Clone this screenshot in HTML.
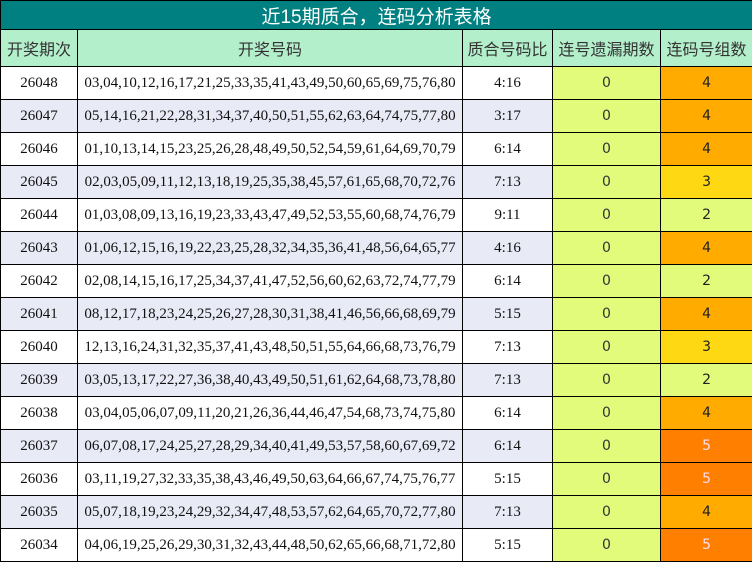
<!DOCTYPE html><html><head><meta charset="utf-8"><style>
body{margin:0;width:752px;height:562px;overflow:hidden;background:#fff}
table{border-collapse:collapse;table-layout:fixed;width:752px;font-family:"Liberation Serif","Noto Serif CJK SC",serif;font-size:15px;color:#111}
td{border:1px solid #000;text-align:center;padding:0;height:32px;white-space:nowrap}
.t td{background:#008080;color:#fff;font-size:19px;height:28px;font-family:"Liberation Sans","Noto Sans CJK SC",sans-serif}
.h td{background:#b4efcc;color:#333;height:36px;font-size:16px;font-family:"Liberation Sans","Noto Sans CJK SC",sans-serif}
tr.s td{background:#e8eaf6}
td.z{background:#e3fb7a!important;font-family:"DejaVu Sans",sans-serif;font-size:14px;color:#333}
td.c{font-family:"DejaVu Sans",sans-serif;font-size:14px;color:#222}
td.c2{background:#e3fb7a!important}td.c3{background:#ffd814!important}td.c4{background:#ffab00!important}td.c5{background:#ff7f00!important;color:#fde}
</style></head><body><table>
<colgroup><col style="width:77px"><col style="width:385px"><col style="width:90px"><col style="width:108px"><col style="width:92px"></colgroup>
<tr class="t"><td colspan="5">近15期质合，连码分析表格</td></tr>
<tr class="h"><td>开奖期次</td><td>开奖号码</td><td>质合号码比</td><td>连号遗漏期数</td><td>连码号组数</td></tr>
<tr><td>26048</td><td>03,04,10,12,16,17,21,25,33,35,41,43,49,50,60,65,69,75,76,80</td><td>4:16</td><td class="z">0</td><td class="c c4">4</td></tr>
<tr class="s"><td>26047</td><td>05,14,16,21,22,28,31,34,37,40,50,51,55,62,63,64,74,75,77,80</td><td>3:17</td><td class="z">0</td><td class="c c4">4</td></tr>
<tr><td>26046</td><td>01,10,13,14,15,23,25,26,28,48,49,50,52,54,59,61,64,69,70,79</td><td>6:14</td><td class="z">0</td><td class="c c4">4</td></tr>
<tr class="s"><td>26045</td><td>02,03,05,09,11,12,13,18,19,25,35,38,45,57,61,65,68,70,72,76</td><td>7:13</td><td class="z">0</td><td class="c c3">3</td></tr>
<tr><td>26044</td><td>01,03,08,09,13,16,19,23,33,43,47,49,52,53,55,60,68,74,76,79</td><td>9:11</td><td class="z">0</td><td class="c c2">2</td></tr>
<tr class="s"><td>26043</td><td>01,06,12,15,16,19,22,23,25,28,32,34,35,36,41,48,56,64,65,77</td><td>4:16</td><td class="z">0</td><td class="c c4">4</td></tr>
<tr><td>26042</td><td>02,08,14,15,16,17,25,34,37,41,47,52,56,60,62,63,72,74,77,79</td><td>6:14</td><td class="z">0</td><td class="c c2">2</td></tr>
<tr class="s"><td>26041</td><td>08,12,17,18,23,24,25,26,27,28,30,31,38,41,46,56,66,68,69,79</td><td>5:15</td><td class="z">0</td><td class="c c4">4</td></tr>
<tr><td>26040</td><td>12,13,16,24,31,32,35,37,41,43,48,50,51,55,64,66,68,73,76,79</td><td>7:13</td><td class="z">0</td><td class="c c3">3</td></tr>
<tr class="s"><td>26039</td><td>03,05,13,17,22,27,36,38,40,43,49,50,51,61,62,64,68,73,78,80</td><td>7:13</td><td class="z">0</td><td class="c c2">2</td></tr>
<tr><td>26038</td><td>03,04,05,06,07,09,11,20,21,26,36,44,46,47,54,68,73,74,75,80</td><td>6:14</td><td class="z">0</td><td class="c c4">4</td></tr>
<tr class="s"><td>26037</td><td>06,07,08,17,24,25,27,28,29,34,40,41,49,53,57,58,60,67,69,72</td><td>6:14</td><td class="z">0</td><td class="c c5">5</td></tr>
<tr><td>26036</td><td>03,11,19,27,32,33,35,38,43,46,49,50,63,64,66,67,74,75,76,77</td><td>5:15</td><td class="z">0</td><td class="c c5">5</td></tr>
<tr class="s"><td>26035</td><td>05,07,18,19,23,24,29,32,34,47,48,53,57,62,64,65,70,72,77,80</td><td>7:13</td><td class="z">0</td><td class="c c4">4</td></tr>
<tr><td>26034</td><td>04,06,19,25,26,29,30,31,32,43,44,48,50,62,65,66,68,71,72,80</td><td>5:15</td><td class="z">0</td><td class="c c5">5</td></tr>
</table></body></html>
